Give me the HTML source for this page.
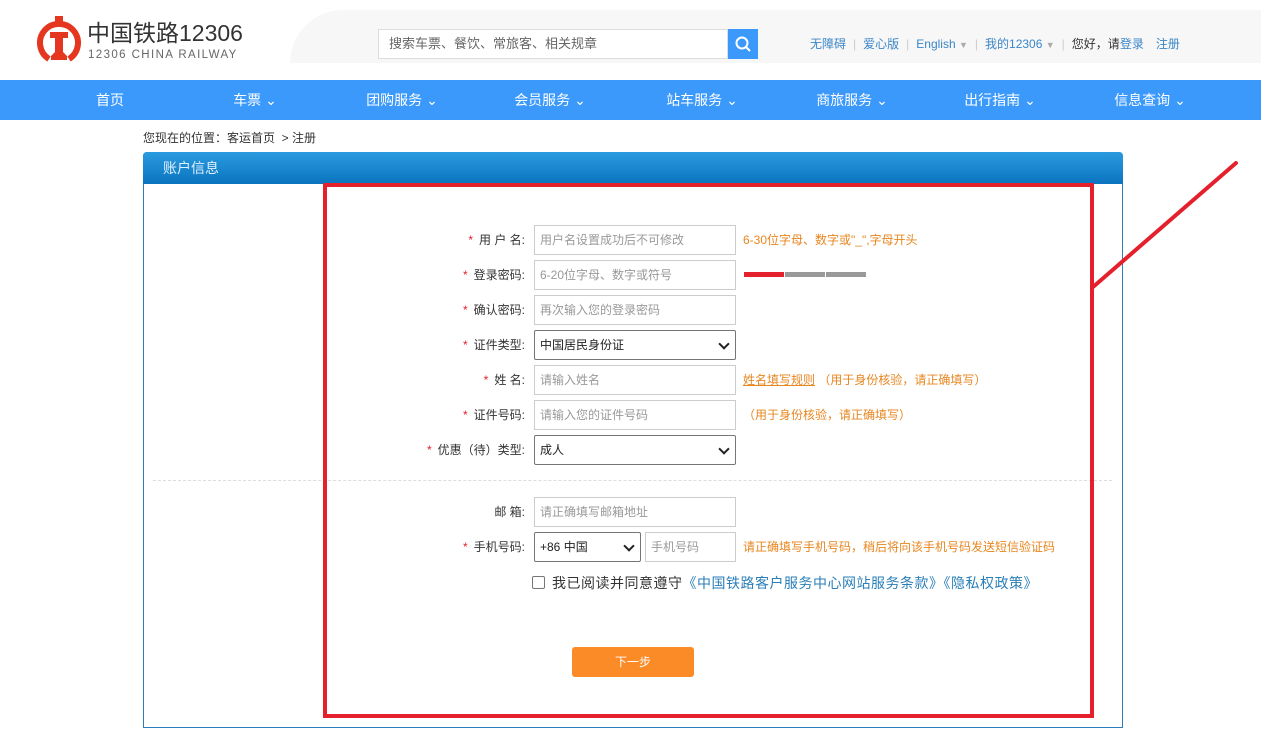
<!DOCTYPE html>
<html><head><meta charset="utf-8"><style>
*{margin:0;padding:0;box-sizing:border-box}
body{width:1261px;height:739px;position:relative;background:#fff;font-family:"Liberation Sans","Noto Sans CJK SC",sans-serif;font-size:12px;color:#333;overflow:hidden}
.a{position:absolute}
.nav span{position:absolute;top:0;line-height:40px;color:#fff;font-size:14px;transform:translateX(-50%);white-space:nowrap}
.lab{position:absolute;right:736px;font-size:12px;color:#333;text-align:right;white-space:nowrap;line-height:30px}
.lab b{color:#e3202b;font-weight:normal;margin-right:6px}
.inp{position:absolute;left:534px;width:202px;height:30px;border:1px solid #ccc;color:#999;line-height:28px;padding-left:5px;font-size:12px}
.sel{border:1px solid #767676;border-radius:2px;color:#222}
.sel:after{content:"";position:absolute;right:7px;top:9px;width:6px;height:6px;border-right:2px solid #222;border-bottom:2px solid #222;transform:rotate(45deg)}
.tip{position:absolute;left:743px;color:#e8861f;line-height:30px;white-space:nowrap}
.sep{color:#ccc;margin:0 7px}
</style></head><body>
<div class="a" style="left:290px;top:10px;width:971px;height:53px;background:#f7f7f7;border-radius:60px 0 0 0"></div>
<svg class="a" style="left:37px;top:14px" width="44" height="52" viewBox="0 0 44 52">
<path d="M12 45 A19 19 0 1 1 32 45" fill="none" stroke="#e5361f" stroke-width="6"/>
<rect x="18" y="2" width="8" height="7" fill="#e5361f"/>
<path d="M13 18 H31 V24 H26 V38 L30 42 V46 H14 V42 L18 38 V24 H13 Z" fill="#e5361f"/>
</svg>
<div class="a" style="left:87px;top:19px;font-size:23px;color:#333;line-height:28px">中国铁路12306</div>
<div class="a" style="left:88px;top:49px;font-size:11.5px;color:#666;letter-spacing:1.4px">12306 CHINA RAILWAY</div>
<div class="a" style="left:378px;top:29px;width:350px;height:30px;border:1px solid #ddd;background:#fff;color:#666;font-size:13px;line-height:28px;padding-left:10px">搜索车票、餐饮、常旅客、相关规章</div>
<div class="a" style="left:728px;top:29px;width:30px;height:30px;background:#3b99fc"><svg width="30" height="30"><circle cx="14" cy="14" r="5.5" fill="none" stroke="#fff" stroke-width="2"/><path d="M18 18 L22 22" stroke="#fff" stroke-width="2"/></svg></div>
<div class="a" style="left:810px;top:36px;font-size:12px;color:#3b86c8;white-space:nowrap;line-height:16px">无障碍<span class="sep">|</span>爱心版<span class="sep">|</span>English <span style="color:#aaa;font-size:9px">▼</span><span class="sep">|</span>我的12306 <span style="color:#aaa;font-size:9px">▼</span><span class="sep">|</span><span style="color:#333">您好，请</span>登录<span style="margin-left:12px">注册</span></div>
<div class="a nav" style="left:0;top:80px;width:1261px;height:40px;background:#3b99fc">
<span style="left:110px">首页</span><span style="left:255px">车票 ⌄</span><span style="left:402px">团购服务 ⌄</span><span style="left:550px">会员服务 ⌄</span><span style="left:702px">站车服务 ⌄</span><span style="left:852px">商旅服务 ⌄</span><span style="left:1000px">出行指南 ⌄</span><span style="left:1150px">信息查询 ⌄</span>
</div>
<div class="a" style="left:143px;top:129px;font-size:12px;color:#333">您现在的位置：客运首页 &nbsp;&gt; 注册</div>
<div class="a" style="left:143px;top:152px;width:980px;height:576px;border:1px solid #2a7fb8;border-radius:4px 4px 0 0"></div>
<div class="a" style="left:143px;top:152px;width:980px;height:32px;background:linear-gradient(#2a9be0,#0b74c0);border-radius:4px 4px 0 0;color:#dff0ff;font-size:14px;line-height:32px;padding-left:20px">账户信息</div>
<div class="a" style="left:153px;top:480px;width:959px;border-top:1px dashed #ddd"></div>

<div class="lab" style="top:225px"><b>*</b>用 户 名:</div><div class="inp" style="top:225px">用户名设置成功后不可修改</div><div class="tip" style="top:225px">6-30位字母、数字或"_",字母开头</div>
<div class="lab" style="top:260px"><b>*</b>登录密码:</div><div class="inp" style="top:260px">6-20位字母、数字或符号</div>
<div class="a" style="left:744px;top:272px;width:40px;height:5px;background:#e3202b"></div><div class="a" style="left:785px;top:272px;width:40px;height:5px;background:#999"></div><div class="a" style="left:826px;top:272px;width:40px;height:5px;background:#999"></div>
<div class="lab" style="top:295px"><b>*</b>确认密码:</div><div class="inp" style="top:295px">再次输入您的登录密码</div>
<div class="lab" style="top:330px"><b>*</b>证件类型:</div><div class="inp sel" style="top:330px">中国居民身份证</div>
<div class="lab" style="top:365px"><b>*</b>姓 名:</div><div class="inp" style="top:365px">请输入姓名</div><div class="tip" style="top:365px"><u>姓名填写规则</u> （用于身份核验，请正确填写）</div>
<div class="lab" style="top:400px"><b>*</b>证件号码:</div><div class="inp" style="top:400px">请输入您的证件号码</div><div class="tip" style="top:400px">（用于身份核验，请正确填写）</div>
<div class="lab" style="top:435px"><b>*</b>优惠（待）类型:</div><div class="inp sel" style="top:435px">成人</div>
<div class="lab" style="top:497px">邮 箱:</div><div class="inp" style="top:497px">请正确填写邮箱地址</div>
<div class="lab" style="top:532px"><b>*</b>手机号码:</div><div class="inp sel" style="top:532px;width:107px">+86 中国</div><div class="inp" style="top:532px;left:645px;width:91px">手机号码</div><div class="tip" style="top:532px">请正确填写手机号码，稍后将向该手机号码发送短信验证码</div>
<div class="a" style="left:532px;top:576px;width:13px;height:13px;border:1px solid #767676;border-radius:2px"></div>
<div class="a" style="left:552px;top:573px;font-size:14px;color:#333;white-space:nowrap;letter-spacing:0.5px">我已阅读并同意遵守<span style="color:#2a7fb8">《中国铁路客户服务中心网站服务条款》《隐私权政策》</span></div>
<div class="a" style="left:572px;top:647px;width:122px;height:30px;background:#fb8b26;border-radius:3px;color:#fff;text-align:center;line-height:30px">下一步</div>

<div class="a" style="left:323px;top:183px;width:771px;height:535px;border:4px solid #e3202b"></div>
<svg class="a" style="left:0;top:0" width="1261" height="739"><line x1="1093" y1="287" x2="1236" y2="163" stroke="#e3202b" stroke-width="4" stroke-linecap="round"/></svg>
</body></html>
